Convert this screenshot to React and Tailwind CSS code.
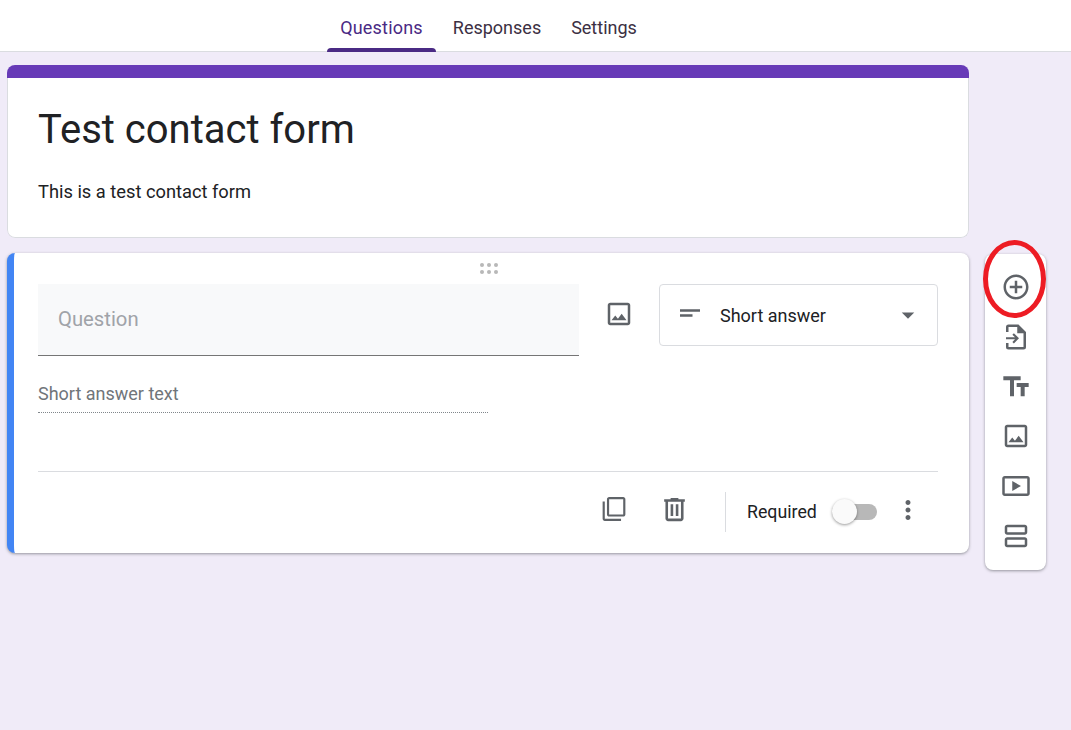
import React from 'react';

// Material icons, all on a 24 grid
function Icon({ d, size = 24, className = 'text-[#5f6368]' }) {
  return (
    <svg width={size} height={size} viewBox="0 0 24 24" fill="currentColor" className={className}>
      <path d={d} />
    </svg>
  );
}

const icons = {
  add: 'M13 7h-2v4H7v2h4v4h2v-4h4v-2h-4V7zm-1-5C6.48 2 2 6.48 2 12s4.48 10 10 10 10-4.48 10-10S17.52 2 12 2zm0 18c-4.41 0-8-3.59-8-8s3.59-8 8-8 8 3.59 8 8-3.59 8-8 8z',
  importFile: 'M6 2h8l6 6v12a2 2 0 0 1-2 2H6a2 2 0 0 1-2-2v-3.3h2V20h12V9h-5V4H6v4H4V4a2 2 0 0 1 2-2zM4 12.2h7.2l-2.1-2.1 1.2-1.2 4.1 4.1-4.1 4.1-1.2-1.2 2.1-2.1H4z',
  title: 'M2.5 4v3h5v12h3V7h5V4h-13zm19 5h-9v3h3v7h3v-7h3V9z',
  image: 'M19 5v14H5V5h14m0-2H5c-1.1 0-2 .9-2 2v14c0 1.1.9 2 2 2h14c1.1 0 2-.9 2-2V5c0-1.1-.9-2-2-2zm-4.86 8.86l-3 3.87L9 13.14 6 17h12l-3.86-5.14z',
  video: 'M21 4H3c-1.1 0-2 .9-2 2v12c0 1.1.9 2 2 2h18c1.1 0 2-.9 2-2V6c0-1.1-.9-2-2-2zm0 14H3V6h18v12zM9 8v8l7-4z',
  section: 'M19 13H5c-1.1 0-2 .9-2 2v4c0 1.1.9 2 2 2h14c1.1 0 2-.9 2-2v-4c0-1.1-.9-2-2-2zm0 6H5v-4h14v4zM19 3H5c-1.1 0-2 .9-2 2v4c0 1.1.9 2 2 2h14c1.1 0 2-.9 2-2V5c0-1.1-.9-2-2-2zm0 6H5V5h14v4z',
  copy: 'M3.5 5h-2v16c0 1.1.9 2 2 2h15v-2h-15V5zm17-4H7.5c-1.1 0-2 .9-2 2v14c0 1.1.9 2 2 2h13c1.1 0 2-.9 2-2V3c0-1.1-.9-2-2-2zm0 16h-13V3h13v14z',
  trash: 'M15 4V3H9v1H4v2h1v13c0 1.1.9 2 2 2h10c1.1 0 2-.9 2-2V6h1V4h-5zm2 15H7V6h10v13zM9 8h2v9H9zm4 0h2v9h-2z',
  more: 'M12 8c1.1 0 2-.9 2-2s-.9-2-2-2-2 .9-2 2 .9 2 2 2zm0 2c-1.1 0-2 .9-2 2s.9 2 2 2 2-.9 2-2-.9-2-2-2zm0 6c-1.1 0-2 .9-2 2s.9 2 2 2 2-.9 2-2-.9-2-2-2z',
  shortText: 'M4 9h16v2H4zm0 4h10v2H4z',
  caret: 'M7 10l5 5 5-5z',
};

const sideItems = ['add', 'importFile', 'title', 'image', 'video', 'section'];

export default function App() {
  return (
    <div className="relative h-[730px] w-[1071px] overflow-hidden bg-[#f0ebf8] font-['Roboto',sans-serif] text-[#202124]">
      {/* Tabs */}
      <header className="flex h-[52px] border-b border-[#dadce0] bg-white pl-[327px] text-[18px] text-[#3c3043]">
        <div className="relative flex w-[109px] items-center justify-center pt-1 tracking-[0.2px] text-[#4a2a84]">
          Questions
          <div className="absolute -bottom-px left-0 right-0 h-1 rounded-t-[4px] bg-[#4a2a84]" />
        </div>
        <div className="flex w-[122px] items-center justify-center pt-1">Responses</div>
        <div className="flex w-[92px] items-center justify-center pt-1">Settings</div>
      </header>

      <div className="flex items-start gap-4 pl-[7px] pt-[13px]">
        <main className="flex w-[962px] flex-col gap-[15px]">
          {/* Form title */}
          <section className="flex h-[173px] flex-col overflow-hidden rounded-lg">
            <div className="h-[13px] bg-[#673ab7]" />
            <div className="flex-1 rounded-b-lg border-x border-b border-[#dadce0] bg-white">
              <h1 className="pl-[30px] pt-[28px] text-[40px] leading-[48px]">Test contact form</h1>
              <p className="pl-[30px] pt-[26px] text-[18.3px] leading-6">This is a test contact form</p>
            </div>
          </section>

          {/* Question card */}
          <section className="h-[300px] rounded-lg border-l-[7px] border-[#4285f4] bg-white shadow-[0_1px_3px_rgba(60,64,67,0.5)]">
            <div className="flex justify-center pr-[6px] pt-[10px]">
              <div className="grid grid-cols-3 gap-[3px]">
                {[0, 1, 2, 3, 4, 5].map(i => (
                  <span key={i} className="size-[4px] rounded-full bg-[#b8b8b8]" />
                ))}
              </div>
            </div>

            <div className="flex items-start pl-[24px] pt-[10px]">
              <div className="w-[541px]">
                <div className="flex h-[72px] items-center border-b border-[#757575] bg-[#f8f9fa] pl-5 text-[20.25px] text-[#a0a3a8]">
                  Question
                </div>
                <div className="flex h-[57px] w-[450px] items-end border-b border-dotted border-[#80868b] pb-[5px] text-[18px] text-[#70757a]">
                  Short answer text
                </div>
              </div>
              <div className="flex h-[60px] w-[80px] items-center justify-center">
                <Icon d={icons.image} size={30} />
              </div>
              <div className="flex h-[62px] w-[279px] items-center rounded-[4px] border border-[#dadce0] pl-[15px] pr-[14px] text-[18px]">
                <Icon d={icons.shortText} size={30} className="mb-[4px] mr-[15px] text-[#5f6368]" />
                <span className="flex-1">Short answer</span>
                <Icon d={icons.caret} size={30} className="mb-[1px] text-[#5f6368]" />
              </div>
            </div>

            {/* Footer */}
            <div className="ml-[24px] mr-[31px] mt-[58px] flex h-[81px] items-start border-t border-[#dadce0] pl-[563px] pt-[20px]">
              <div className="mt-[4px]"><Icon d={icons.copy} size={26} /></div>
              <div className="ml-[32px] mt-[2px]"><Icon d={icons.trash} size={31} /></div>
              <div className="ml-[35px] h-10 w-px bg-[#dadce0]" />
              <span className="ml-[21px] pt-[8px] text-[17.75px] leading-6">Required</span>
              <div className="relative ml-[15px] mt-[12px] h-4 w-[45px] rounded-full bg-[#b8b8b8]">
                <div className="absolute -top-[5px] left-0 size-[25px] rounded-full bg-[#fafafa] shadow-[0_1px_3px_rgba(0,0,0,0.4)]" />
              </div>
              <div className="ml-[16px] mt-[3px]"><Icon d={icons.more} size={30} /></div>
            </div>
          </section>
        </main>

        {/* Side toolbar */}
        <aside className="mt-[189px] flex h-[316px] w-[61px] flex-col items-center rounded-lg bg-white pt-[8px] shadow-[0_1px_3px_rgba(60,64,67,0.5)]">
          {sideItems.map(name => (
            <div key={name} className="flex h-[49.8px] w-full items-center justify-center">
              <Icon d={icons[name]} size={name === 'title' ? 32 : 30} className={name === 'title' ? 'mt-[2px] text-[#5f6368]' : 'text-[#5f6368]'} />
            </div>
          ))}
        </aside>
      </div>

      {/* Red annotation round the add button */}
      <div className="absolute left-[983px] top-[240px] h-[78px] w-[63px] rounded-[50%] border-[5px] border-[#ed1c24]" />
    </div>
  );
}
